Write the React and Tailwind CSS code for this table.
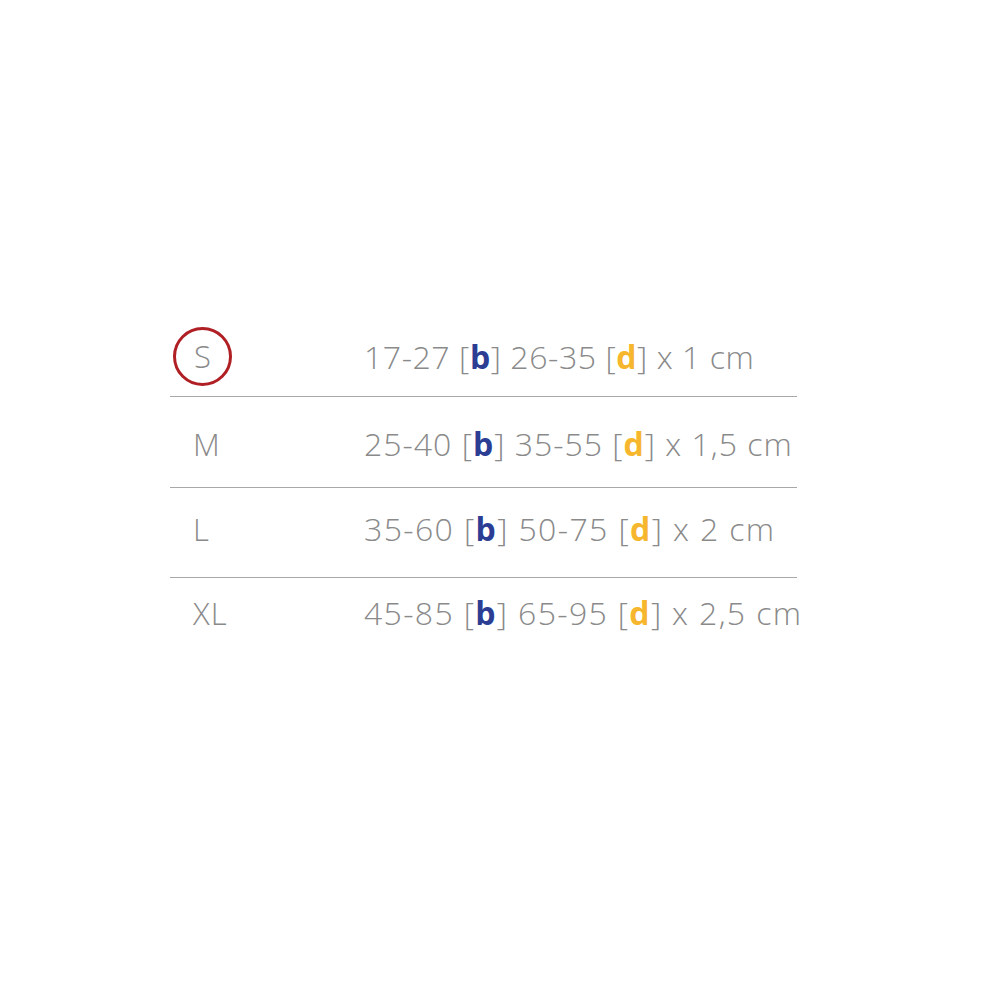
import React from "react";

const rows = [
  { size: "S", b: "17-27", d: "26-35", w: "1", cls: "h-[80px]", track: "tracking-[0.57px]", active: true },
  { size: "M", b: "25-40", d: "35-55", w: "1,5", cls: "h-[91px] pt-[4px]", track: "tracking-[1px]" },
  { size: "L", b: "35-60", d: "50-75", w: "2", cls: "h-[90px] pb-[7px]", track: "tracking-[1.38px]" },
  { size: "XL", b: "45-85", d: "65-95", w: "2,5", cls: "h-[69px] pt-[1px]", track: "tracking-[1.34px]" },
];

function App() {
  return (
    <div className="w-[1000px] h-[1000px] bg-white pt-[317px] pl-[170px]" style={{ fontFamily: '"Open Sans", "Liberation Sans", sans-serif' }}>
      <div className="w-[627px]">
        {rows.map((r, i) => (
          <div
            key={r.size}
            className={`flex items-center ${r.cls} ${i < rows.length - 1 ? "border-b border-[#a8a8a8]" : ""}`}
          >
            {/* size label */}
            <div className="w-[194px] shrink-0 flex items-center">
              {r.active ? (
                <div className="ml-[3px] w-[59px] h-[59px] rounded-full border-[3px] border-[#b01f24] flex items-center justify-center text-[31px] font-light text-[#8a8a8a] leading-none">
                  S
                </div>
              ) : (
                <span className="ml-[23px] text-[31px] font-light text-[#8a8a8a] leading-none tracking-[1px]">{r.size}</span>
              )}
            </div>
            {/* dimensions */}
            <div className={`shrink-0 text-[32px] font-light text-[#8a8a8a] leading-none whitespace-nowrap ${r.track}`}>
              {r.b} [<span className="font-bold text-[#2b3e94]">b</span>] {r.d} [
              <span className="font-bold text-[#f6b72e]">d</span>] x {r.w} cm
            </div>
          </div>
        ))}
      </div>
    </div>
  );
}

export default App;
